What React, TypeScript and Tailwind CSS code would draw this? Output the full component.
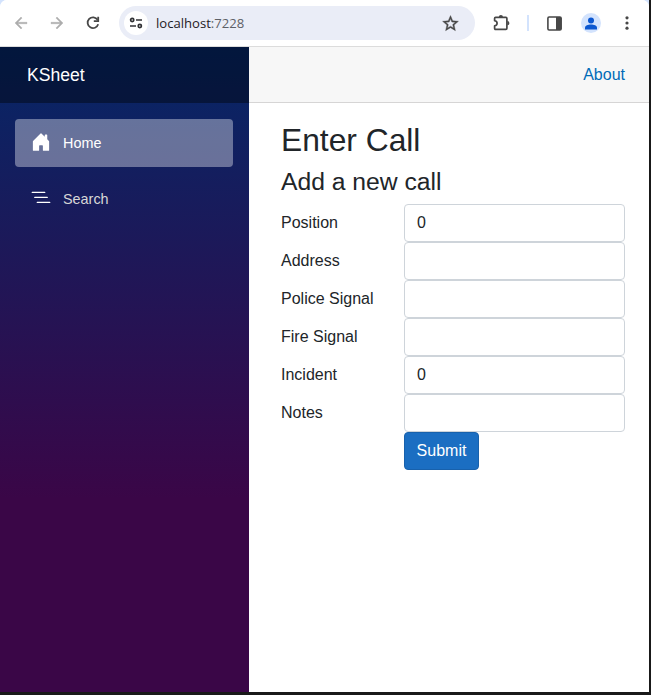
import type { ReactNode } from 'react';

function ToolIcon({ size, className, children }: { size: number; className?: string; children: ReactNode }) {
  return (
    <svg
      width={size}
      height={size}
      viewBox="0 0 24 24"
      fill="currentColor"
      stroke="currentColor"
      strokeWidth="0.5"
      className={`shrink-0 ${className ?? ''}`}
    >
      {children}
    </svg>
  );
}

function Toolbar() {
  return (
    <header className="flex h-[47px] shrink-0 items-center border-b border-[#dcdcdc] bg-white text-[#474747]">
      <ToolIcon size={18} className="ml-3 text-[#adadad]">
        <path d="M20 11H7.83l5.59-5.59L12 4l-8 8 8 8 1.41-1.41L7.83 13H20v-2z" />
      </ToolIcon>
      <ToolIcon size={18} className="ml-[18px] text-[#adadad]">
        <path d="M12 4l-1.41 1.41L16.17 11H4v2h12.17l-5.58 5.59L12 20l8-8z" />
      </ToolIcon>
      <svg
        width="14"
        height="14"
        viewBox="0 0 14 14"
        fill="none"
        stroke="currentColor"
        strokeWidth="1.8"
        className="ml-5 shrink-0"
      >
        <path d="M11.6 3.8A5.4 5.4 0 1 0 12.2 8.3" />
        <path d="M12.2.8V5.2H7.8" />
      </svg>
      <div className="ml-[19px] flex h-[34px] w-[356px] items-center rounded-full bg-[#eaedf7] pr-[15px]">
        <span className="ml-[5px] flex size-6 items-center justify-center rounded-full bg-white">
          <svg width="14" height="12" viewBox="0 0 14 12" fill="none" stroke="#303134" strokeWidth="1.7">
            <circle cx="3.2" cy="3" r="1.6" />
            <path d="M7 3h6M1 9h6" />
            <circle cx="10.8" cy="9" r="1.6" />
          </svg>
        </span>
        <span className="ml-2 flex-1 font-['Open_Sans',sans-serif] text-[13.1px] leading-5 text-[#5d6066]">
          <span className="text-[#1f2024]">localhost</span>:7228
        </span>
        <ToolIcon size={19}>
          <path d="M22 9.24l-7.19-.62L12 2 9.19 8.63 2 9.24l5.46 4.73L5.82 21 12 17.27 18.18 21l-1.63-7.03L22 9.24zM12 15.4l-3.76 2.27 1-4.28-3.32-2.88 4.38-.38L12 6.1l1.71 4.04 4.38.38-3.32 2.88 1 4.28L12 15.4z" />
        </ToolIcon>
      </div>
      <svg width="18" height="18" viewBox="0 0 18 18" className="ml-[18px] shrink-0" fill="none">
        <path
          d="M2.6 3.4H12.9Q13.9 3.4 13.9 4.4V14.3Q13.9 15.3 12.9 15.3H2.6Q1.6 15.3 1.6 14.3V11.9C3.2 11.6 4.1 10.6 4.1 9.3S3.2 7 1.6 6.7V4.4Q1.6 3.4 2.6 3.4Z"
          stroke="#474747"
          strokeWidth="1.7"
          strokeLinejoin="round"
        />
        <path d="M5.8 3.2a2.1 2.1 0 0 1 4.2 0ZM14.3 7.1a2.1 2.1 0 0 1 0 4.2Z" fill="#474747" />
      </svg>
      <span className="ml-4 h-4 w-0.5 bg-[#d3e3fd]" />
      <svg width="15" height="15" viewBox="0 0 15 15" className="ml-[18px] shrink-0">
        <rect x=".9" y="1" width="13.2" height="13" rx="1.2" fill="none" stroke="#474747" strokeWidth="1.6" />
        <path d="M9 1h4.5l1 1v11l-1 1H9Z" fill="#474747" />
      </svg>
      <span className="ml-[19px] flex size-5 items-center justify-center rounded-full bg-[#d3e3fd] text-[#0b57d0]">
        <svg width="12" height="13" viewBox="0 0 12 13" fill="currentColor">
          <circle cx="6" cy="3.4" r="3" />
          <path d="M0 12.5v-1.8C0 8.6 3.1 7.5 6 7.5s6 1.1 6 3.2v1.8Z" />
        </svg>
      </span>
      <svg width="4" height="14" viewBox="0 0 4 14" fill="currentColor" className="ml-6 shrink-0">
        <circle cx="2" cy="1.8" r="1.6" />
        <circle cx="2" cy="7" r="1.6" />
        <circle cx="2" cy="12.2" r="1.6" />
      </svg>
    </header>
  );
}

function NavItem({ label, active, path }: { label: string; active?: boolean; path: string }) {
  return (
    <a
      className={`flex h-12 items-center rounded-[4px] px-4 text-[14.4px] ${active ? 'bg-white/[.37] text-white' : 'text-[#d7d7d7]'}`}
    >
      <svg width="20" height="20" viewBox="0 0 16 16" fill="white" className="mr-3 -mt-0.5">
        <path d={path} />
      </svg>
      <span className="pt-0.5">{label}</span>
    </a>
  );
}

const house =
  'M6.5 14.5v-3.505c0-.245.25-.495.5-.495h2c.25 0 .5.25.5.5v3.5a.5.5 0 0 0 .5.5h4a.5.5 0 0 0 .5-.5v-7a.5.5 0 0 0-.146-.354L13 5.793V2.5a.5.5 0 0 0-.5-.5h-1a.5.5 0 0 0-.5.5v1.293L8.354 1.146a.5.5 0 0 0-.708 0l-6 6A.5.5 0 0 0 1.5 7.5v7a.5.5 0 0 0 .5.5h4a.5.5 0 0 0 .5-.5Z';
const nestedList =
  'M4.5 11.5A.5.5 0 0 1 5 11h10a.5.5 0 0 1 0 1H5a.5.5 0 0 1-.5-.5zm-2-4A.5.5 0 0 1 3 7h10a.5.5 0 0 1 0 1H3a.5.5 0 0 1-.5-.5zm-2-4A.5.5 0 0 1 1 3h10a.5.5 0 0 1 0 1H1a.5.5 0 0 1-.5-.5z';

const fields = [
  { label: 'Position', value: '0' },
  { label: 'Address', value: '' },
  { label: 'Police Signal', value: '' },
  { label: 'Fire Signal', value: '' },
  { label: 'Incident', value: '0' },
  { label: 'Notes', value: '' },
];

export default function App() {
  return (
    <div className="h-[695px] w-[651px] overflow-hidden bg-[#191919] font-['Liberation_Sans',Arial,sans-serif] text-base text-[#212529]">
      <div className="w-[649px] bg-[#d3e3fd]">
        <div className="flex h-[692px] flex-col overflow-hidden rounded-t-[7px] bg-white">
          <Toolbar />
          <div className="flex flex-1">
            <aside className="w-[249px] bg-[linear-gradient(180deg,rgb(5,39,103)_0%,#3a0647_70%)]">
              <div className="flex h-14 items-center bg-black/40 pl-[27px] text-[17.6px] text-white">KSheet</div>
              <nav className="flex flex-col gap-2 pl-[15px] pr-4 pt-4">
                <NavItem label="Home" active path={house} />
                <NavItem label="Search" path={nestedList} />
              </nav>
            </aside>
            <main className="flex-1">
              <div className="flex h-14 items-center justify-end border-b border-[#d6d5d5] bg-[#f7f7f7] pr-6">
                <a className="text-[#006bb7]">About</a>
              </div>
              <article className="pl-8 pr-6 pt-[17.6px]">
                <h1 className="mb-2 text-[31.75px] font-medium leading-[1.2]">Enter Call</h1>
                <h3 className="mb-2 text-[24.7px] font-medium leading-[1.2]">Add a new call</h3>
                <form className="grid grid-cols-[123px_221px]">
                  {fields.map((f) => (
                    <label key={f.label} className="col-span-2 grid h-[38px] grid-cols-subgrid items-center">
                      <span className="-mt-px">{f.label}</span>
                      <input
                        type="text"
                        defaultValue={f.value}
                        className="h-[38px] w-full rounded-[4px] border border-[#ced4da] bg-white px-3 text-base outline-none"
                      />
                    </label>
                  ))}
                  <button
                    type="button"
                    className="col-start-2 h-[38px] w-[75px] rounded-[4px] border border-[#1861ac] bg-[#1b6ec2] text-white"
                  >
                    Submit
                  </button>
                </form>
              </article>
            </main>
          </div>
        </div>
      </div>
    </div>
  );
}
